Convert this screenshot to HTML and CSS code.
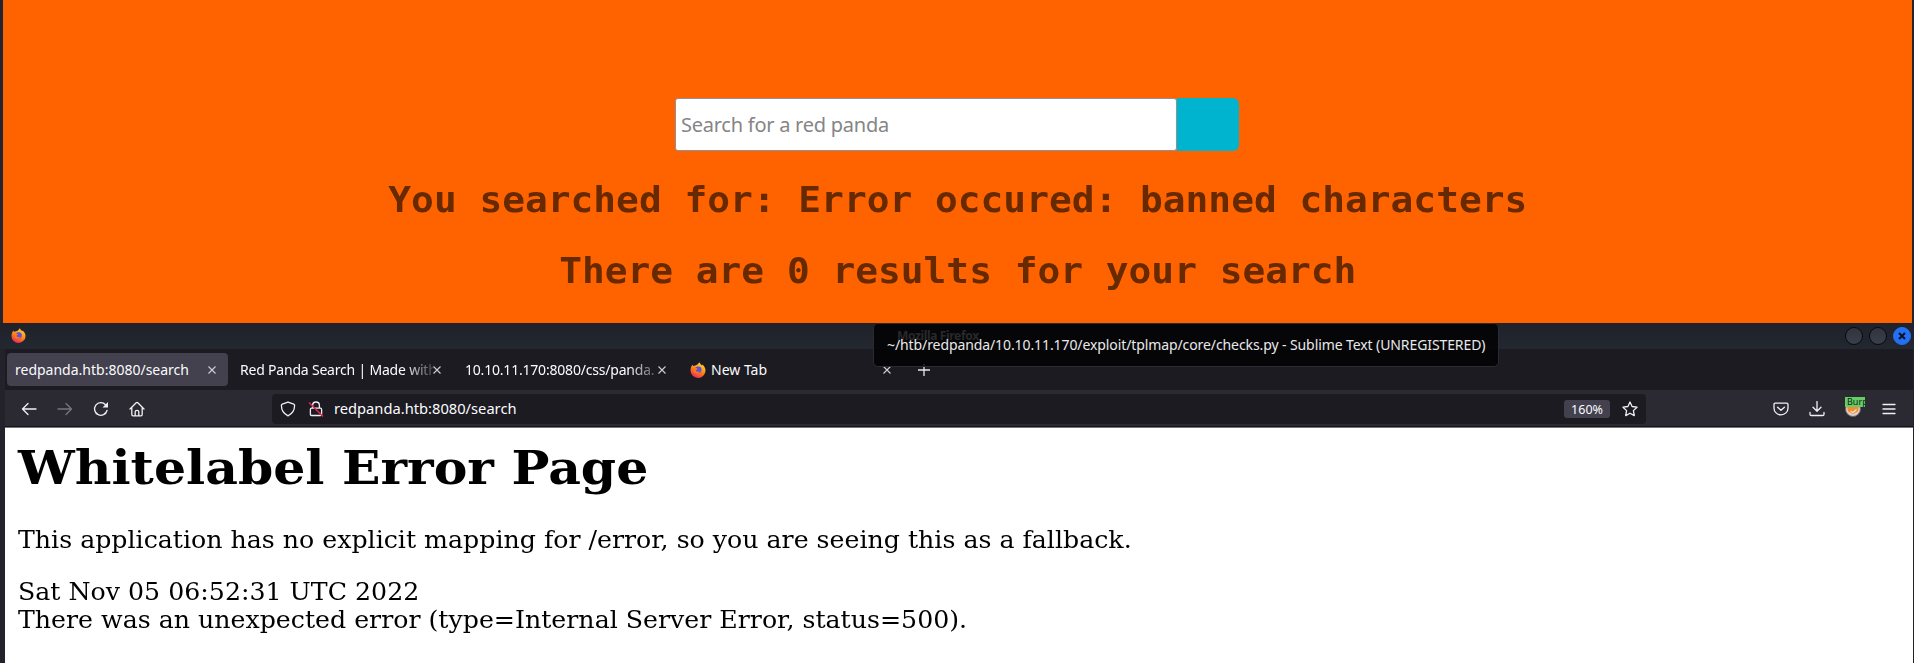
FILE: index.html
```
<!DOCTYPE html>
<html lang="en">
<head>
<meta charset="utf-8">
<title>Red Panda Search</title>
<link rel="stylesheet" href="styles.css">
</head>
<body>
<svg width="0" height="0" class="defs" aria-hidden="true">
  <defs>
    <linearGradient id="flame" x1="0.8" y1="0" x2="0.3" y2="1">
      <stop offset="0" stop-color="#ffe03a"/><stop offset="0.5" stop-color="#ff8a16"/><stop offset="1" stop-color="#f0274f"/>
    </linearGradient>
    <symbol id="firefox" viewBox="0 0 16 16">
      <path fill="url(#flame)" d="M1 5.2 2.3 2.8 3.4 4 5.3 3.4C7 3.2 8.500 1.700 9.400.2c.7 1.500 1.600 2.100 2.500 3.300l.4-.9c2 1.500 3.200 3.600 3.200 5.800A7.500 7.500 0 0 1 .5 8.500C.5 7.300.7 6.100 1 5.200z"/>
      <circle cx="8.200" cy="7.700" r="3.300" fill="#5b54d8"/>
      <path fill="#ff7a1e" d="M3 6.300c2-.8 3.500-.5 4.800.8L5.600 8.300c.8 1.600 3 2 4.800 1-1.100 2-4.600 2.600-6.400.6z"/>
    </symbol>
    <symbol id="close" viewBox="0 0 8 8"><path d="M.5.5l7 7m0-7l-7 7" fill="none" stroke="currentColor" stroke-width="1.100"/></symbol>
  </defs>
</svg>

<section class="search-page">
  <form class="search">
    <div class="field">Search for a red panda</div>
    <div class="go"></div>
  </form>
  <h2 class="l1">You searched for: Error occured: banned characters</h2>
  <h2 class="l2">There are 0 results for your search</h2>
</section>

<section class="window">
  <header class="titlebar">
    <svg class="logo"><use href="#firefox"/></svg>
    <span class="title">Mozilla Firefox</span>
    <div class="controls">
      <i></i><i></i>
      <i class="x"><svg viewBox="0 0 8 8"><path d="M1 1l6 6m0-6l-6 6" stroke="#0a1226" stroke-width="2" fill="none"/></svg></i>
    </div>
  </header>

  <nav class="tabs">
    <div class="tab active"><span class="label">redpanda.htb:8080/search</span><svg class="close"><use href="#close"/></svg></div>
    <div class="tab"><span class="label fade tight">Red Panda Search | Made with</span><svg class="close"><use href="#close"/></svg></div>
    <div class="tab"><span class="label fade tight">10.10.11.170:8080/css/panda.</span><svg class="close"><use href="#close"/></svg></div>
    <div class="tab"><svg class="favicon"><use href="#firefox"/></svg><span class="label">New Tab</span><svg class="close"><use href="#close"/></svg></div>
    <svg class="plus" viewBox="0 0 12 12"><path d="M6 0v12M0 6h12" stroke="#e8e8ec" stroke-width="1.300"/></svg>
  </nav>

  <div class="toolbar">
    <div class="nav">
      <svg viewBox="0 0 16 16"><path d="M15 8H1.500M7 2.500L1.500 8 7 13.500"/></svg>
      <svg class="dim" viewBox="0 0 16 16"><path d="M1 8h13.500M9 2.500L14.500 8 9 13.500"/></svg>
      <svg viewBox="0 0 16 16"><path d="M14 9.500A6.300 6.300 0 1 1 12.600 3.800"/><path class="solid" d="M15 1v5.500H9.500z"/></svg>
      <svg viewBox="0 0 16 16"><path d="M1 8l6.200-6.200q.8-.7 1.600 0L15 8M2.800 6.500v7q0 1.300 1.300 1.300h7.800q1.300 0 1.300-1.300v-7M6.200 14.500v-3.800q0-1.300 1.800-1.300t1.800 1.300v3.800"/></svg>
    </div>
    <div class="urlbar">
      <svg viewBox="0 0 16 16"><path d="M8 1.200l5.700 1.900q.9.300.9 1.200C14.600 9.500 12 13 8 14.800 4 13 1.400 9.500 1.400 4.300q0-.9.900-1.200z"/></svg>
      <svg class="lock" viewBox="0 0 16 16"><path d="M4.600 7V4.400a3.400 3.400 0 0 1 6.800 0V7M3.600 7.200h8.800q1.200 0 1.200 1.200v4.900q0 1.200-1.200 1.200H3.600q-1.200 0-1.200-1.200V8.400q0-1.200 1.200-1.200z"/><path class="slash" d="M1.500 2l13 13"/></svg>
      <span class="url">redpanda.htb:8080/search</span>
      <span class="zoom">160%</span>
      <svg class="star" viewBox="0 0 16 16"><path d="M8 1l2.100 4.500 4.900.7-3.600 3.400.9 5L8 12.200l-4.300 2.400.9-5L1 6.200l4.900-.7z"/></svg>
    </div>
    <div class="actions">
      <svg viewBox="0 0 16 16"><path d="M2.300 2.200h11.400q1.300 0 1.300 1.300v3.700a7 6.600 0 0 1-14 0V3.500q0-1.300 1.300-1.300zM4.600 6.200L8 9.300l3.400-3.100"/></svg>
      <svg viewBox="0 0 16 16"><path d="M8 .5V10M4 6.300l4 4 4-4M1 11.500v1.700q0 1.300 1.300 1.300h11.400q1.300 0 1.300-1.300v-1.700"/></svg>
      <div class="foxy">
        <svg viewBox="0 0 16 16"><circle class="face" cx="8" cy="8" r="7.500"/><path class="fur" d="M2 5h12l-1 5.500L10 12 8 13 6 12l-3-1.500z"/><path class="snout" d="M6 10.500l2 1 3-2.500"/></svg>
        <span class="badge">Burp</span>
      </div>
      <svg class="menu" viewBox="0 0 16 16"><path d="M2 3.500h12M2 8h12M2 12.500h12"/></svg>
    </div>
  </div>

  <main class="page">
    <h1>Whitelabel Error Page</h1>
    <p>This application has no explicit mapping for /error, so you are seeing this as a fallback.</p>
    <div>Sat Nov 05 06:52:31 UTC 2022</div>
    <div>There was an unexpected error (type=Internal Server Error, status=500).</div>
  </main>

  <div class="tooltip">~/htb/redpanda/10.10.11.170/exploit/tplmap/core/checks.py - Sublime Text (UNREGISTERED)</div>
</section>
</body>
</html>
```
FILE: styles.css
```
* { box-sizing: border-box; }
html, body { height: 663px; overflow: hidden; }
body { margin: 0; background: #1c1b22; font: 14px/20px "Noto Sans", sans-serif; color: #fbfbfe; }
svg { display: block; flex: none; }
.defs { position: absolute; }

.search-page { height: 323px; padding-top: 98px; background: #ff6300; border-left: 3px solid #23252e; border-right: 2px solid #23252e; display: flex; flex-direction: column; align-items: center; }
.search { display: flex; align-self: flex-start; margin: 0 0 0 672px; height: 53px; }
.field { width: 502px; background: #fff; border: 1px solid #8f8f9d; border-radius: 3px; color: #858585; font-size: 20px; letter-spacing: -0.250px; line-height: 51px; padding-left: 5px; white-space: nowrap; }
.go { width: 62px; background: #00b4cf; border-radius: 0 6px 6px 0; }
.search-page h2 { margin: 0; font: bold 35px/44px "DejaVu Sans Mono", monospace; color: #662900; white-space: nowrap; transform: scaleX(1.081); }
.search-page .l1 { margin-top: 27px; }
.search-page .l2 { margin-top: 27px; }

.window { position: relative; height: 340px; border-left: 5px solid #23222b; border-right: 1px solid #23222b; }
.titlebar { height: 26px; margin: 0 -1px 0 -5px; padding: 0 3px 1px 11px; display: flex; align-items: center; background: linear-gradient(#1f2229, #232730); }
.logo { width: 15px; height: 15px; }
.title { margin-left: 871px; color: #d8dade; font: bold 12px/24px "Noto Sans", sans-serif; letter-spacing: -0.350px; }
.controls { margin-left: auto; display: flex; gap: 6px; }
.controls i { width: 18px; height: 18px; border-radius: 50%; background: linear-gradient(#30343f, #3b3f4b); border: 1px solid #08090c; }
.controls .x { background: #2470f5; border-color: #2470f5; padding: 4px; }
.controls .x svg { width: 8px; height: 8px; }

.tabs { height: 41px; display: flex; align-items: center; background: #1c1b22; padding-left: 2px; }
.tab { width: 225px; height: 33px; display: flex; align-items: center; border-radius: 4px; padding-left: 12px; }
.tab.active { width: 221px; background: #42414d; padding-left: 8px; }
.label { flex: 1; overflow: hidden; white-space: nowrap; }
.tight { letter-spacing: -0.200px; }
.fade { -webkit-mask-image: linear-gradient(90deg, #000 85%, transparent 103%); mask-image: linear-gradient(90deg, #000 85%, transparent 103%); }
.close { width: 8px; height: 8px; margin-right: 12px; color: #cfcfd8; }
.favicon { width: 16px; height: 16px; margin-right: 5px; }
.plus { width: 12px; height: 12px; margin-left: 15px; }

.toolbar { height: 38px; display: flex; align-items: center; background: #2b2a33; border-bottom: 1px solid #77757c; box-shadow: inset 0 -1px #15141a; padding: 0 16px; }
.toolbar svg { width: 16px; height: 16px; fill: none; stroke: #f0f0f4; stroke-width: 1.300; stroke-linejoin: round; stroke-linecap: round; }
.toolbar .solid { fill: #f0f0f4; stroke: none; }
.toolbar .dim { stroke: #77767e; }
.toolbar .slash { stroke: #e22850; stroke-width: 1.500; }
.nav { display: flex; gap: 20px; width: 251px; }
.urlbar { width: 1374px; height: 30px; background: #1c1b22; border-radius: 4px; display: flex; align-items: center; padding: 0 8px; }
.urlbar .lock { margin-left: 12px; }
.url { margin-left: 10px; flex: 1; font-size: 14.700px; line-height: 18px; padding-bottom: 1px; }
.zoom { width: 46px; height: 18px; margin-right: 12px; border-radius: 3px; background: #42414d; text-align: center; font-size: 12.500px; line-height: 19px; }
.actions { display: flex; margin-left: auto; gap: 20px; }
.foxy { position: relative; width: 16px; }
.toolbar .face { fill: #d9d2cc; stroke: #70605a; stroke-width: 1; }
.toolbar .fur { fill: #f58b32; stroke: none; }
.toolbar .snout { stroke: #f7e6d6; stroke-width: 1.200; }
.badge { position: absolute; left: 0; top: -4px; width: 20px; height: 10px; overflow: hidden; background: #66cc66; color: #10241a; font-size: 9px; line-height: 10px; padding-left: 2px; }

.page { height: 235px; background: #fff; color: #000; padding: 11px 0 0 13px; font: 23.500px/28px "DejaVu Serif", serif; white-space: nowrap; }
.page > * { width: fit-content; transform: scaleX(1.074); transform-origin: 0 0; }
.page h1 { margin: 0; font-size: 47px; line-height: 58px; }
.page p { margin: 29px 0 24px; }

.tooltip { position: absolute; left: 868px; top: 0; width: 626px; height: 44px; padding: 11px 0 0 13px; border: 1px solid #2b2c33; border-radius: 5px; background: rgba(0, 0, 0, 0.820); color: #e9e9ea; white-space: nowrap; letter-spacing: -0.095px; }
```
